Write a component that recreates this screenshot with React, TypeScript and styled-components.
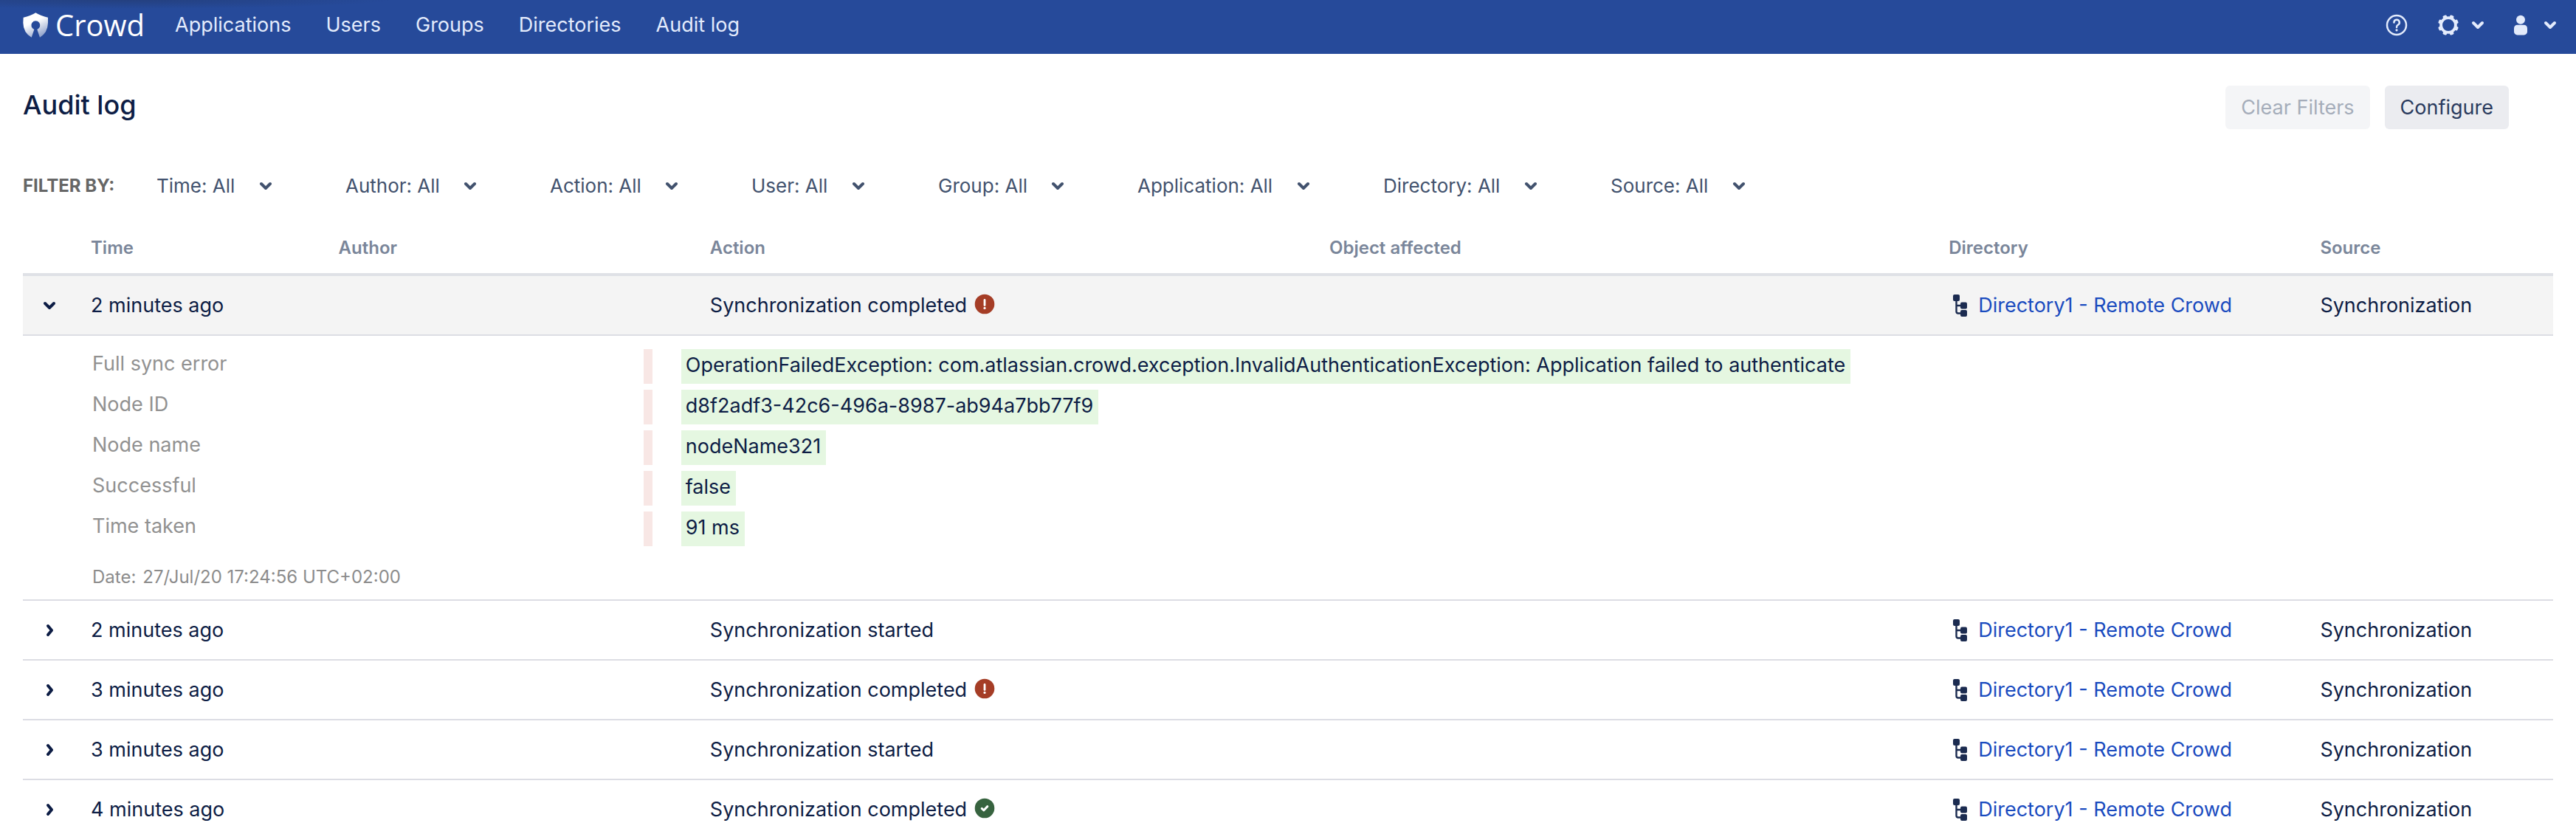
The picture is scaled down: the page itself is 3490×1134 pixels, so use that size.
import React, { useState } from "react";
import styled, { createGlobalStyle } from "styled-components";

const GlobalStyle = createGlobalStyle`
  *, *::before, *::after { box-sizing: border-box; }
  body {
    margin: 0;
    background: #fff;
    color: #0d1d45;
    font-family: Inter, "Liberation Sans", sans-serif;
    font-size: 27px;
    line-height: 40px;
  }
`;

const Page = styled.div`
  height: 100vh;
  overflow-y: auto;
  scrollbar-width: none;
`;

/* ---------- top bar ---------- */

const Header = styled.header`
  display: flex;
  align-items: center;
  justify-content: space-between;
  height: 73px;
  padding: 0 19px 6px 31px;
  background: radial-gradient(ellipse 360px 12px at 170px 0, #24407f, #264a9a00), #264a9a;
`;

const HeaderGroup = styled.div`
  display: flex;
  align-items: center;
`;

const Brand = styled.a`
  display: flex;
  align-items: center;
  gap: 10px;
  margin-right: 41px;
  color: #fff;
  font-family: "Open Sans", "Noto Sans", sans-serif;
  font-size: 40px;
  text-decoration: none;
`;

const Nav = styled.nav`
  display: flex;
  gap: 47px;
`;

const NavLink = styled.a`
  color: #e3ebfc;
  text-decoration: none;
`;

const IconButton = styled.button`
  display: flex;
  align-items: center;
  gap: 8px;
  margin-left: 26px;
  padding: 0;
  border: 0;
  background: none;
  color: #e3ebfc;
  cursor: pointer;
`;

const HelpButton = styled(IconButton)`
  margin-right: 12px;
`;

/* ---------- page head ---------- */

const Main = styled.main`
  padding: 43px 31px 0;
`;

const PageHead = styled.div`
  display: flex;
  justify-content: space-between;
  padding-right: 60px;
`;

const Title = styled.h1`
  margin: 0;
  font-size: 36px;
  font-weight: 500;
  line-height: 52px;
`;

const Actions = styled.div`
  display: flex;
  gap: 20px;
`;

const Button = styled.button`
  height: 59px;
  padding: 0 21px;
  border: 0;
  border-radius: 6px;
  background: #ebecf0;
  color: #2a3b5e;
  font: inherit;
  &:disabled {
    background: #f4f5f7;
    color: #a5adba;
  }
`;

/* ---------- filters ---------- */

const Filters = styled.form`
  display: flex;
  align-items: center;
  margin-top: 57px;
`;

const FiltersLabel = styled.span`
  flex: none;
  width: 181px;
  color: #666;
  font-size: 24px;
  font-weight: 700;
`;

const Filter = styled.label`
  display: flex;
  align-items: center;
  gap: 25px;
  margin-right: 92px;
  color: #42526e;
`;

const FilterSelect = styled.select`
  appearance: none;
  padding: 0;
  border: 0;
  background: none;
  color: inherit;
  font: inherit;
  font-size: 26px;
  cursor: pointer;
`;

/* ---------- table ---------- */

const Table = styled.table`
  width: 100%;
  margin-top: 30px;
  border-collapse: separate;
  border-spacing: 0;
  table-layout: fixed;
`;

const Column = styled.col<{ $width: string }>`
  width: ${(p) => p.$width};
`;

const HeadCell = styled.th`
  padding: 14px 20px;
  border-bottom: 4px solid #dfe1e6;
  color: #7a869a;
  font-size: 24px;
  font-weight: 600;
  text-align: left;
`;

const Row = styled.tr<{ $open: boolean }>`
  background: ${(p) => (p.$open ? "#f4f4f4" : "transparent")};
`;

const Cell = styled.td`
  height: 81px;
  padding: 0 20px;
  border-bottom: 2px solid #dcdde4;
`;

const Toggle = styled.button`
  display: flex;
  padding: 0;
  border: 0;
  background: none;
  color: inherit;
  cursor: pointer;
`;

const Inline = styled.span`
  display: flex;
  align-items: center;
  gap: 8px;
  white-space: nowrap;
`;

const StatusIcon = styled.svg`
  margin-bottom: 4px;
`;

const DirectoryLink = styled.a`
  color: #1a4bbf;
  text-decoration: none;
`;

const DetailCell = styled.td`
  padding: 18px 36px 10px 22px;
  border-bottom: 2px solid #dcdde4;
`;

const DetailSpacer = styled.td`
  border-bottom: 2px solid #dcdde4;
`;

const DetailRow = styled.div`
  display: grid;
  grid-template-columns: 23fr 12px 39px 77fr;
  height: 47px;
  margin-bottom: 8px;
`;

const DetailLabel = styled.span`
  color: #919191;
`;

const OldValue = styled.del`
  background: #f8e7e5;
`;

const NewValue = styled.ins`
  grid-column: 4;
  justify-self: start;
  padding: 0 7px 3px 6px;
  background: #e5f7e1;
  line-height: 44px;
  text-decoration: none;
  white-space: nowrap;
`;

const DetailDate = styled.div`
  display: flex;
  gap: 9px;
  margin-top: 22px;
  color: #8c8c8c;
  font-size: 24px;
`;

/* ---------- icons ---------- */

const LogoIcon = () => (
  <svg width="34" height="34" viewBox="33 50 102 102" aria-hidden="true">
    <defs>
      <linearGradient id="shield" gradientUnits="userSpaceOnUse" x1="92" y1="80" x2="124" y2="144">
        <stop offset="0" stopColor="#fff" />
        <stop offset="1" stopColor="#fff" stopOpacity="0.45" />
      </linearGradient>
    </defs>
    <path
      fill="url(#shield)"
      d="M35 70Q64 64 85 51Q106 64 135 70V92Q134 132 102 151L91 119A18 18 0 1 0 79 119L68 151Q35 132 34 92Z"
    />
  </svg>
);

const Chevron = ({ right = false }: { right?: boolean }) => (
  <svg width="32" height="32" viewBox="0 0 32 32" fill="none" aria-hidden="true">
    <path
      d={right ? "M14 10L19 16L14 22" : "M10 13L16 19L22 13"}
      stroke="currentColor"
      strokeWidth="4"
      strokeLinecap="round"
      strokeLinejoin="round"
    />
  </svg>
);

const HelpIcon = () => (
  <svg width="32" height="32" viewBox="0 0 32 32" fill="none" stroke="currentColor" aria-hidden="true">
    <circle cx="16" cy="16" r="13" strokeWidth="2.5" />
    <path d="M12.4 12.4A3.7 3.7 0 1 1 17.6 15.8Q16 16.8 16 19" strokeWidth="2.5" strokeLinecap="round" />
    <circle cx="16" cy="22.8" r="1.6" fill="currentColor" stroke="none" />
  </svg>
);

const teeth = [0, 1, 2, 3, 4, 5, 6, 7].map((i) => 22.5 + i * 45);

const GearIcon = () => (
  <svg width="32" height="32" viewBox="0 0 32 32" fill="none" aria-hidden="true">
    <circle cx="16" cy="16" r="9.9" stroke="currentColor" strokeWidth="3.8" />
    {teeth.map((angle) => (
      <rect
        key={angle}
        x="13.2"
        y="2"
        width="5.6"
        height="5"
        rx="1.5"
        fill="currentColor"
        transform={`rotate(${angle} 16 16)`}
      />
    ))}
  </svg>
);

const PersonIcon = () => (
  <svg width="32" height="32" viewBox="0 0 32 32" fill="currentColor" aria-hidden="true">
    <circle cx="16" cy="8.8" r="6" />
    <rect x="7" y="15.8" width="18" height="13.6" rx="4.5" />
  </svg>
);

const ErrorIcon = () => (
  <StatusIcon width="32" height="32" viewBox="0 0 32 32" role="img" aria-label="Failed">
    <circle cx="16" cy="16" r="13.3" fill="#a53d26" />
    <path d="M16 10.4V17.6" stroke="#fff" strokeWidth="2.8" strokeLinecap="round" />
    <circle cx="16" cy="21.4" r="1.6" fill="#fff" />
  </StatusIcon>
);

const SuccessIcon = () => (
  <StatusIcon width="32" height="32" viewBox="0 0 32 32" role="img" aria-label="Successful">
    <circle cx="16" cy="16" r="13.3" fill="#37633f" />
    <path
      d="M12.2 16.4L14.9 18.8L19.8 13.6"
      fill="none"
      stroke="#fff"
      strokeWidth="3"
      strokeLinecap="round"
      strokeLinejoin="round"
    />
  </StatusIcon>
);

const DirectoryIcon = () => (
  <svg width="32" height="32" viewBox="0 0 32 32" fill="#1b2b50" aria-hidden="true">
    <path d="M10.5 8V24Q10.5 26.5 13 26.5H18M10.5 16H18" fill="none" stroke="#1b2b50" strokeWidth="2.4" />
    <rect x="6" y="1" width="9" height="9" rx="2" />
    <rect x="16" y="11.5" width="9" height="9" rx="2" />
    <rect x="16" y="22" width="9" height="9" rx="2" />
  </svg>
);

/* ---------- data ---------- */

const navItems = ["Applications", "Users", "Groups", "Directories", "Audit log"];
const filters = ["Time", "Author", "Action", "User", "Group", "Application", "Directory", "Source"];

const columns = [
  { title: "Time", width: "9.79%" },
  { title: "Author", width: "14.68%" },
  { title: "Action", width: "24.48%" },
  { title: "Object affected", width: "24.48%" },
  { title: "Directory", width: "14.68%" },
  { title: "Source", width: "auto" },
];

type Entry = {
  id: number;
  time: string;
  action: string;
  status?: "error" | "success";
  date?: string;
  details?: [string, string][];
};

const entries: Entry[] = [
  {
    id: 1,
    time: "2 minutes ago",
    action: "Synchronization completed",
    status: "error",
    date: "27/Jul/20 17:24:56 UTC+02:00",
    details: [
      [
        "Full sync error",
        "OperationFailedException: com.atlassian.crowd.exception.InvalidAuthenticationException: Application failed to authenticate",
      ],
      ["Node ID", "d8f2adf3-42c6-496a-8987-ab94a7bb77f9"],
      ["Node name", "nodeName321"],
      ["Successful", "false"],
      ["Time taken", "91 ms"],
    ],
  },
  { id: 2, time: "2 minutes ago", action: "Synchronization started" },
  { id: 3, time: "3 minutes ago", action: "Synchronization completed", status: "error" },
  { id: 4, time: "3 minutes ago", action: "Synchronization started" },
  { id: 5, time: "4 minutes ago", action: "Synchronization completed", status: "success" },
];

export default function App() {
  const [openId, setOpenId] = useState<number | null>(1);

  return (
    <Page>
      <GlobalStyle />
      <Header>
        <HeaderGroup>
          <Brand href="#">
            <LogoIcon />
            Crowd
          </Brand>
          <Nav>
            {navItems.map((item) => (
              <NavLink key={item} href="#">
                {item}
              </NavLink>
            ))}
          </Nav>
        </HeaderGroup>
        <HeaderGroup>
          <HelpButton aria-label="Help">
            <HelpIcon />
          </HelpButton>
          <IconButton aria-label="Administration">
            <GearIcon />
            <Chevron />
          </IconButton>
          <IconButton aria-label="Account">
            <PersonIcon />
            <Chevron />
          </IconButton>
        </HeaderGroup>
      </Header>

      <Main>
        <PageHead>
          <Title>Audit log</Title>
          <Actions>
            <Button disabled>Clear Filters</Button>
            <Button>Configure</Button>
          </Actions>
        </PageHead>

        <Filters>
          <FiltersLabel>FILTER BY:</FiltersLabel>
          {filters.map((name) => (
            <Filter key={name}>
              <FilterSelect aria-label={name}>
                <option>{name}: All</option>
              </FilterSelect>
              <Chevron />
            </Filter>
          ))}
        </Filters>

        <Table>
          <colgroup>
            <Column $width="72px" />
            {columns.map((c) => (
              <Column key={c.title} $width={c.width} />
            ))}
          </colgroup>
          <thead>
            <tr>
              <HeadCell aria-label="Details" />
              {columns.map((c) => (
                <HeadCell key={c.title}>{c.title}</HeadCell>
              ))}
            </tr>
          </thead>
          <tbody>
            {entries.map((entry) => {
              const open = entry.id === openId;
              return (
                <React.Fragment key={entry.id}>
                  <Row $open={open}>
                    <Cell>
                      <Toggle
                        aria-label="Toggle details"
                        aria-expanded={open}
                        onClick={() => setOpenId(open ? null : entry.id)}
                      >
                        <Chevron right={!open} />
                      </Toggle>
                    </Cell>
                    <Cell>{entry.time}</Cell>
                    <Cell />
                    <Cell>
                      <Inline>
                        {entry.action}
                        {entry.status === "error" && <ErrorIcon />}
                        {entry.status === "success" && <SuccessIcon />}
                      </Inline>
                    </Cell>
                    <Cell />
                    <Cell>
                      <Inline>
                        <DirectoryIcon />
                        <DirectoryLink href="#">Directory1 - Remote Crowd</DirectoryLink>
                      </Inline>
                    </Cell>
                    <Cell>Synchronization</Cell>
                  </Row>
                  {open && entry.details && (
                    <tr>
                      <DetailSpacer />
                      <DetailCell colSpan={6}>
                        {entry.details.map(([label, value]) => (
                          <DetailRow key={label}>
                            <DetailLabel>{label}</DetailLabel>
                            <OldValue />
                            <NewValue>{value}</NewValue>
                          </DetailRow>
                        ))}
                        <DetailDate>
                          <span>Date:</span>
                          <span>{entry.date}</span>
                        </DetailDate>
                      </DetailCell>
                    </tr>
                  )}
                </React.Fragment>
              );
            })}
          </tbody>
        </Table>
      </Main>
    </Page>
  );
}
